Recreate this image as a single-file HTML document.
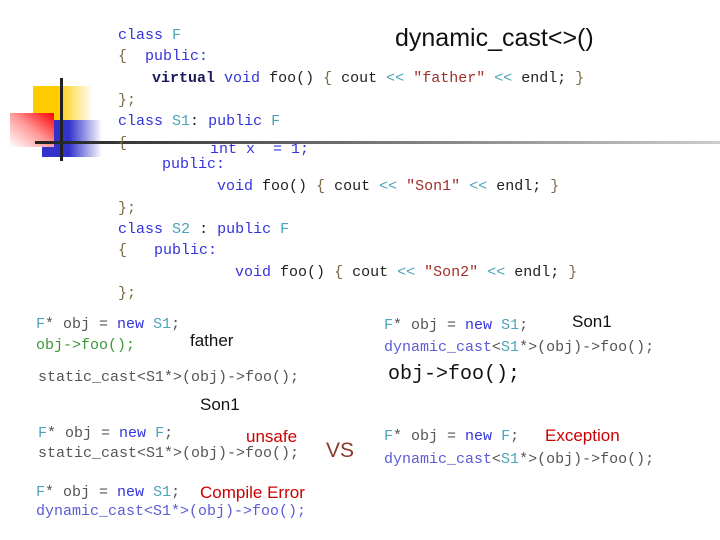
<!DOCTYPE html>
<html><head><style>
body{margin:0;width:720px;height:540px;background:#fff;position:relative;overflow:hidden;font-family:"Liberation Mono",monospace;}
.l{position:absolute;font-size:15px;line-height:18px;white-space:pre;color:#555;}
.s{position:absolute;font-family:"Liberation Sans",sans-serif;white-space:pre;line-height:20px;}
.k{color:#3333dd}.t{color:#4aa3b8}.b{color:#7a6a40}.d{color:#222}.r{color:#a0302a}.g{color:#3a9a3a}.p{color:#5b5bd6}
</style></head><body>
<div style="position:absolute;left:33px;top:86px;width:60px;height:34px;background:linear-gradient(to right,#ffcc00 40%,rgba(255,230,120,0) 100%)"></div>
<div style="position:absolute;left:42px;top:120px;width:60px;height:37px;background:linear-gradient(to right,#3333cc 45%,rgba(51,51,204,0) 100%)"></div>
<div style="position:absolute;left:10px;top:113px;width:44px;height:34px;background:linear-gradient(to top right,#fff 0%,#ff9a9a 50%,#ff0000 100%)"></div>
<div style="position:absolute;left:60px;top:78px;width:3px;height:83px;background:#222"></div>
<div style="position:absolute;left:35px;top:141px;width:685px;height:3px;background:linear-gradient(to right,#222 0%,#555 30%,#ccc 100%)"></div>

<div class="l" style="left:118px;top:27px"><span class="k">class</span> <span class="t">F</span></div>
<div class="l" style="left:118px;top:48px"><span class="b">{</span>  <span class="k">public:</span></div>
<div class="l" style="left:152px;top:70px"><span style="color:#1a1a5a;font-weight:bold">virtual</span> <span class="k">void</span> <span class="d">foo()</span> <span class="b">{</span> <span class="d">cout</span> <span class="t">&lt;&lt;</span> <span class="r">"father"</span> <span class="t">&lt;&lt;</span> <span class="d">endl;</span> <span class="b">}</span></div>
<div class="l b" style="left:118px;top:92px">};</div>
<div class="l" style="left:118px;top:113px"><span class="k">class</span> <span class="t">S1</span><span class="d">:</span> <span class="k">public</span> <span class="t">F</span></div>
<div class="l b" style="left:118px;top:135px">{</div>
<div class="l k" style="left:210px;top:141px">int x  = 1;</div>
<div class="l k" style="left:162px;top:156px">public:</div>
<div class="l" style="left:217px;top:178px"><span class="k">void</span> <span class="d">foo()</span> <span class="b">{</span> <span class="d">cout</span> <span class="t">&lt;&lt;</span> <span class="r">"Son1"</span> <span class="t">&lt;&lt;</span> <span class="d">endl;</span> <span class="b">}</span></div>
<div class="l b" style="left:118px;top:200px">};</div>
<div class="l" style="left:118px;top:221px"><span class="k">class</span> <span class="t">S2</span> <span class="d">:</span> <span class="k">public</span> <span class="t">F</span></div>
<div class="l" style="left:118px;top:242px"><span class="b">{</span>   <span class="k">public:</span></div>
<div class="l" style="left:235px;top:264px"><span class="k">void</span> <span class="d">foo()</span> <span class="b">{</span> <span class="d">cout</span> <span class="t">&lt;&lt;</span> <span class="r">"Son2"</span> <span class="t">&lt;&lt;</span> <span class="d">endl;</span> <span class="b">}</span></div>
<div class="l b" style="left:118px;top:285px">};</div>

<div class="s" style="left:395px;top:24px;font-size:25px;line-height:28px;color:#111">dynamic_cast&lt;&gt;()</div>

<div class="l" style="left:36px;top:316px"><span class="t">F</span>* obj = <span class="k">new</span> <span class="t">S1</span>;</div>
<div class="l g" style="left:36px;top:337px">obj-&gt;foo();</div>
<div class="s" style="left:190px;top:331px;font-size:17px;color:#111">father</div>
<div class="l" style="left:38px;top:369px">static_cast&lt;S1*&gt;(obj)-&gt;foo();</div>
<div class="s" style="left:200px;top:395px;font-size:17px;color:#111">Son1</div>
<div class="l" style="left:38px;top:425px"><span class="t">F</span>* obj = <span class="k">new</span> <span class="t">F</span>;</div>
<div class="s" style="left:246px;top:427px;font-size:17px;color:#cc0000">unsafe</div>
<div class="l" style="left:38px;top:445px">static_cast&lt;S1*&gt;(obj)-&gt;foo();</div>
<div class="s" style="left:326px;top:439px;font-size:21px;line-height:24px;color:#8b3a2a">VS</div>
<div class="l" style="left:36px;top:484px"><span class="t">F</span>* obj = <span class="k">new</span> <span class="t">S1</span>;</div>
<div class="s" style="left:200px;top:483px;font-size:17px;color:#cc0000">Compile Error</div>
<div class="l p" style="left:36px;top:503px">dynamic_cast&lt;S1*&gt;(obj)-&gt;foo();</div>

<div class="l" style="left:384px;top:317px"><span class="t">F</span>* obj = <span class="k">new</span> <span class="t">S1</span>;</div>
<div class="s" style="left:572px;top:312px;font-size:17px;color:#111">Son1</div>
<div class="l" style="left:384px;top:339px"><span class="p">dynamic_cast</span>&lt;<span class="t">S1</span>*&gt;(obj)-&gt;foo();</div>
<div class="l" style="left:388px;top:363px;font-size:20px;line-height:24px;color:#111">obj-&gt;foo();</div>
<div class="l" style="left:384px;top:428px"><span class="t">F</span>* obj = <span class="k">new</span> <span class="t">F</span>;</div>
<div class="s" style="left:545px;top:426px;font-size:17px;color:#cc0000">Exception</div>
<div class="l" style="left:384px;top:451px"><span class="p">dynamic_cast</span>&lt;<span class="t">S1</span>*&gt;(obj)-&gt;foo();</div>
</body></html>
